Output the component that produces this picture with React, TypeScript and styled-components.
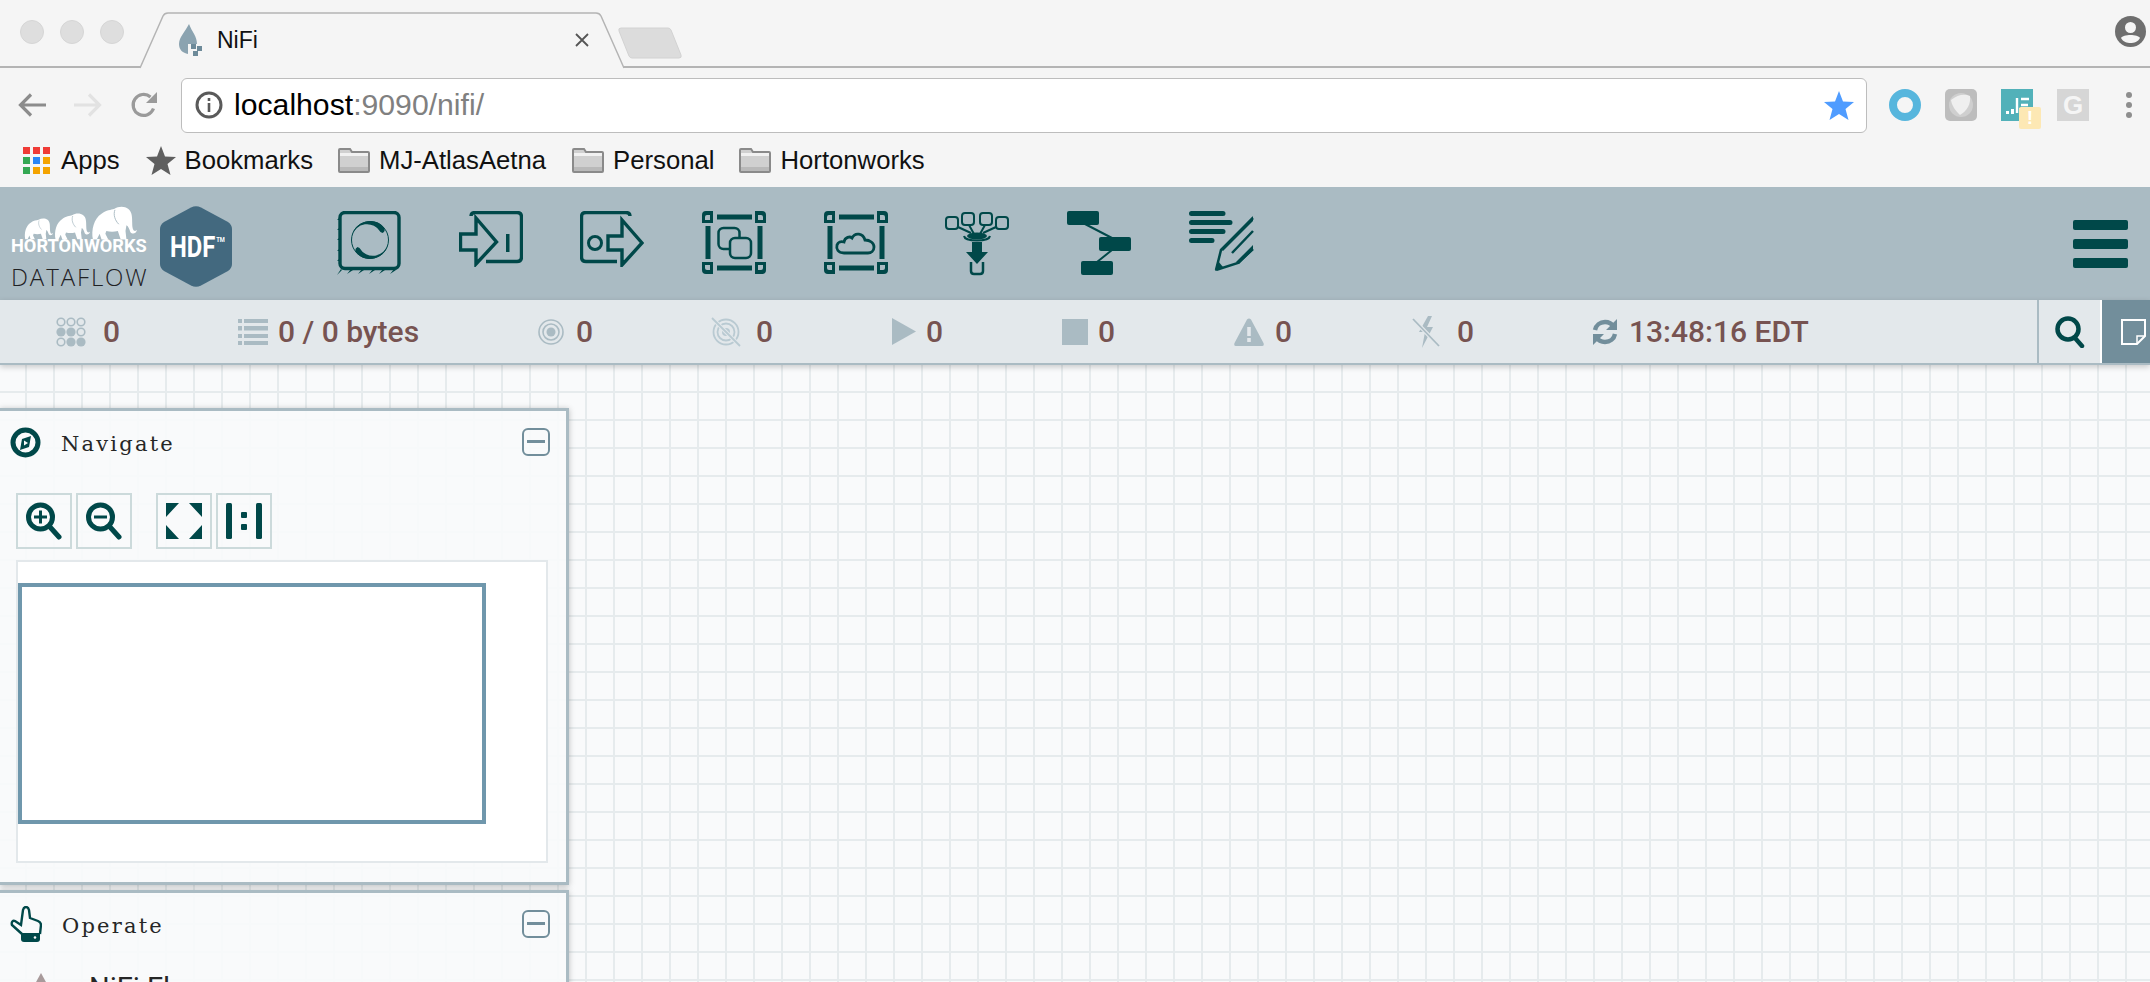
import React from 'react';
import styled, { createGlobalStyle } from 'styled-components';

const TEAL = '#004849';
const STEEL = '#aabbc3';
const SLATE = '#728e9b';
const BROWN = '#775351';

const GlobalStyle = createGlobalStyle`
  html, body {
    margin: 0;
    padding: 0;
    height: 982px;
    overflow: hidden;
    background: #f5f5f5;
    font-family: 'Liberation Sans', Arial, sans-serif;
  }
  * { box-sizing: border-box; }
  svg { display: block; flex: none; }
`;

const Page = styled.div`
  display: flex;
  flex-direction: column;
  width: 2150px;
  height: 982px;
  overflow: hidden;
`;

/* browser chrome */
const TabStrip = styled.div`
  display: flex;
  align-items: flex-start;
  height: 68px;
  padding-left: 20px;
  border-bottom: 2px solid #b4b4b4;
  background: #f5f5f5;
  flex: none;
`;

const Lights = styled.div`
  display: flex;
  gap: 16px;
  margin-top: 20px;
`;

const Light = styled.span`
  width: 24px;
  height: 24px;
  border-radius: 50%;
  background: #dedede;
  border: 1px solid #d6d6d6;
`;

const Tab = styled.div`
  position: relative;
  display: flex;
  align-items: center;
  width: 484px;
  height: 56px;
  margin: 12px 0 0 16px;
  padding: 0 35px 0 38px;
  gap: 15px;
  font-size: 23px;
  color: #111;
`;

const TabShape = styled.svg`
  position: absolute;
  left: 0;
  top: 0;
`;

const TabIcon = styled.svg`
  position: relative;
`;

const TabTitle = styled.span`
  position: relative;
  flex: 1;
`;

const TabClose = styled.svg`
  position: relative;
`;

const NewTab = styled.svg`
  margin: 27px 0 0 -6px;
`;

const Avatar = styled.svg`
  margin: 16px 4px 0 auto;
`;

const Toolbar = styled.div`
  display: flex;
  align-items: center;
  height: 72px;
  padding: 2px 0 0 18px;
  background: #f5f5f5;
  flex: none;
`;

const NavIcons = styled.div`
  display: flex;
  align-items: center;
  gap: 28px;
  margin-right: 23px;
`;

const Omnibox = styled.div`
  display: flex;
  align-items: center;
  width: 1686px;
  height: 55px;
  padding: 0 12px 0 13px;
  background: #fff;
  border: 1.5px solid #bdbdbd;
  border-radius: 6px;
`;

const Url = styled.div`
  flex: 1;
  margin-left: 11px;
  font-size: 30.2px;
  color: #000;
  white-space: nowrap;
`;

const UrlMuted = styled.span`
  color: #808080;
`;

const Extensions = styled.div`
  display: flex;
  align-items: center;
  margin-left: 22px;
`;

const ExtSlot = styled.div<{ $width: number }>`
  position: relative;
  width: ${({ $width }) => $width}px;
`;

const ExtBadge = styled.span`
  position: absolute;
  left: 18px;
  top: 18px;
  width: 22px;
  height: 22px;
  border-radius: 2px;
  background: #fde8b4;
  color: #fff;
  font-weight: 700;
  font-size: 19px;
  line-height: 22px;
  text-align: center;
`;

const GBox = styled.div`
  width: 32px;
  height: 32px;
  background: #d6d6d6;
  color: #f5f5f5;
  font-weight: 700;
  font-size: 26px;
  line-height: 32px;
  text-align: center;
`;

const MenuDots = styled.div`
  display: flex;
  flex-direction: column;
  gap: 4px;
  margin-left: 37px;
`;

const MenuDot = styled.span`
  width: 6px;
  height: 6px;
  border-radius: 50%;
  background: #8e8e8e;
`;

const Bookmarks = styled.div`
  display: flex;
  align-items: center;
  height: 47px;
  padding: 0 0 7px 23px;
  background: #f5f5f5;
  font-size: 25.7px;
  color: #111;
  flex: none;
`;

const Bookmark = styled.div<{ $gap: number; $next: number }>`
  display: flex;
  align-items: center;
  gap: ${({ $gap }) => $gap}px;
  margin-right: ${({ $next }) => $next}px;
  white-space: nowrap;
`;

const AppsGrid = styled.div`
  display: grid;
  grid-template-columns: repeat(3, 7px);
  grid-auto-rows: 7px;
  gap: 3px;
`;

const AppsDot = styled.span<{ $color: string }>`
  background: ${({ $color }) => $color};
`;

/* NiFi header */
const FlowHeader = styled.header`
  display: flex;
  align-items: flex-start;
  height: 113px;
  padding-left: 11px;
  background: ${STEEL};
  flex: none;
`;

const Brand = styled.div`
  display: flex;
  flex-direction: column;
  width: 149px;
  margin-top: 18px;
`;

const Herd = styled.div`
  display: flex;
  align-items: flex-end;
  gap: 1px;
  height: 35px;
  margin-left: 13px;
`;

const BrandName = styled.div`
  margin-top: -2px;
  font-family: Roboto, sans-serif;
  font-weight: 700;
  font-size: 18.2px;
  line-height: 15px;
  color: #fff;
  white-space: nowrap;
`;

const BrandProduct = styled.div`
  margin-top: 11px;
  font-family: 'Open Sans', sans-serif;
  font-weight: 300;
  font-size: 24px;
  line-height: 26px;
  letter-spacing: 1.9px;
  color: #1f2123;
  white-space: nowrap;
`;

const HexBadge = styled.div`
  position: relative;
  display: flex;
  align-items: center;
  justify-content: center;
  width: 72px;
  height: 81px;
  margin-top: 19px;
`;

const HexShape = styled.svg`
  position: absolute;
  inset: 0;
`;

const HexLabel = styled.span`
  position: relative;
  margin-left: 3px;
  font-family: Roboto, sans-serif;
  font-weight: 700;
  font-size: 29px;
  color: #fff;
  transform: scaleX(0.82);
`;

const HexMark = styled.sup`
  font-size: 7px;
  vertical-align: 15px;
  line-height: 0;
  margin-left: 1px;
`;

const ToolIcons = styled.div`
  display: flex;
  align-items: flex-start;
  gap: 57.7px;
  margin: 24px 0 0 105px;
`;

const Hamburger = styled.div`
  display: flex;
  flex-direction: column;
  gap: 9.5px;
  width: 55px;
  margin: 33px 22px 0 auto;
`;

const HamburgerBar = styled.span`
  height: 9.5px;
  border-radius: 2px;
  background: ${TEAL};
`;

/* status bar */
const StatusBar = styled.div`
  position: relative;
  z-index: 2;
  display: flex;
  align-items: stretch;
  height: 65px;
  padding-left: 56px;
  background: #e3e8eb;
  border-bottom: 2px solid ${STEEL};
  box-shadow: 0 2px 6px rgba(0, 0, 0, 0.2);
  flex: none;
`;

const StatItem = styled.div<{ $width: number; $gap: number }>`
  display: flex;
  align-items: center;
  gap: ${({ $gap }) => $gap}px;
  width: ${({ $width }) => $width}px;
  font-family: Roboto, sans-serif;
  font-weight: 500;
  font-size: 30px;
  color: ${BROWN};
  white-space: nowrap;
`;

const StatusButtons = styled.div`
  display: flex;
  margin-left: auto;
`;

const SearchButton = styled.div`
  display: flex;
  align-items: center;
  justify-content: center;
  width: 65px;
  border-left: 2px solid ${STEEL};
  border-right: 2px solid #fff;
`;

const NoteButton = styled.div`
  display: flex;
  align-items: center;
  width: 48px;
  padding-left: 18px;
  background: ${SLATE};
`;

/* canvas and palettes */
const Canvas = styled.main`
  flex: 1;
  display: flex;
  flex-direction: column;
  gap: 5px;
  padding-top: 43px;
  overflow: hidden;
  background-color: #f9fafb;
  background-image:
    linear-gradient(90deg, #e6ebed 2px, transparent 2px),
    linear-gradient(#e6ebed 2px, transparent 2px);
  background-size: 28px 28px;
  background-position: 25px 26px;
`;

const Palette = styled.section<{ $height: number }>`
  width: 569px;
  height: ${({ $height }) => $height}px;
  padding: 0 16px 0 10px;
  background: rgba(249, 250, 251, 0.92);
  border: 3px solid ${STEEL};
  border-left: 0;
  box-shadow: 0 1px 6px rgba(0, 0, 0, 0.25);
  flex: none;
`;

const PaletteHead = styled.div`
  display: flex;
  align-items: center;
  height: 62px;
  gap: 20px;
`;

const PaletteTitle = styled.h2`
  flex: 1;
  margin: 0;
  padding-top: 3px;
  font-family: 'DejaVu Serif', serif;
  font-weight: 400;
  font-size: 21px;
  letter-spacing: 2.2px;
  color: #262626;
`;

const Collapse = styled.div`
  position: relative;
  width: 28px;
  height: 28px;
  border: 2.5px solid ${SLATE};
  border-radius: 6px;
  &::after {
    content: '';
    position: absolute;
    left: 3px;
    right: 3px;
    top: 10px;
    height: 3px;
    background: ${SLATE};
  }
`;

const NavButtons = styled.div`
  display: flex;
  gap: 4px;
  margin: 20px 0 0 6px;
`;

const NavButton = styled.div<{ $spaced?: boolean }>`
  display: flex;
  align-items: center;
  justify-content: center;
  width: 56px;
  height: 56px;
  margin-left: ${({ $spaced }) => ($spaced ? 20 : 0)}px;
  border: 2.5px solid #ccdadb;
`;

const Birdseye = styled.div`
  width: 532px;
  height: 303px;
  margin: 11px 0 0 6px;
  padding: 21px 0 0 0;
  background: #fff;
  border: 2px solid #e3e8eb;
`;

const Viewport = styled.div`
  width: 468px;
  height: 241px;
  background: #fff;
  border: 4px solid #6f97ac;
`;

const FlowRow = styled.div`
  display: flex;
  align-items: flex-start;
  gap: 37px;
  margin: 18px 0 0 20px;
  font-family: Roboto, sans-serif;
  font-size: 29px;
  line-height: 30px;
  color: #262626;
`;

const Elephant = ({ width }: { width: number }) => (
  <svg width={width} viewBox="0 0 48 36">
    <path
      fill="#fff"
      d="M2 35C0 25 3 13 11 8C16 4 21 4 24 3C29 0 35 0 39 3C43 6 43 12 43 18C43 23 44 26 46 26L48 25C47 29 43 30 41 27C40 24 39 21 37 20L36 26L37 35H31L28 26C24 27 20 27 16 26L15 29L18 35H11L9 29L6 35Z"
    />
    <path fill="none" stroke={STEEL} strokeWidth="1" d="M25 4C23 9 25 15 29 19" />
  </svg>
);

const GroupFrame = () => (
  <>
    <path fill={TEAL} d="M4 0H11V12H0V4Q0 0 4 0ZM53 0H60Q64 0 64 4V12H53ZM0 51H11V63H4Q0 63 0 59ZM53 51H64V59Q64 63 60 63H53Z" />
    <path fill={STEEL} d="M5 4H8V9H3V6Q3 4 5 4ZM56 4H59Q61 4 61 6V9H56ZM3 54H8V59H5Q3 59 3 57ZM56 54H61V57Q61 59 59 59H56Z" />
    <path stroke={TEAL} strokeWidth="5" d="M15 6H50M15 57H50M6 15V48M58 15V48" />
  </>
);

const ProcessorIcon = () => (
  <svg width="64" height="65" viewBox="0 0 64 65">
    <rect x="3" y="1.5" width="59" height="56" rx="5" fill="none" stroke={TEAL} strokeWidth="3.4" />
    <path fill={TEAL} d="M3 6L0 9L3 9ZM3 16L0 19L3 19ZM3 26L0 29L3 29ZM3 37L0 40L3 40ZM3 47L0 50L3 50ZM4 58L0 64L5 59ZM14 58L10 63L16 59ZM25 58L21 63L27 59ZM36 58L32 63L38 59ZM46 58L42 63L48 59ZM57 58L53 63L59 59Z" />
    <circle cx="33" cy="29" r="18.5" fill="none" stroke={TEAL} strokeWidth="1" />
    <path fill={TEAL} d="M15 25A18.5 18.5 0 0 1 47 16.5Q49 20 45.5 22L43.5 21A15.5 15.5 0 0 0 15 25Z" />
    <path fill={TEAL} d="M51 33A18.5 18.5 0 0 1 19 41.5Q17 38 20.5 36L22.5 37A15.5 15.5 0 0 0 51 33Z" />
  </svg>
);

const InputPortIcon = () => (
  <svg width="64" height="56" viewBox="0 0 64 56">
    <path fill="none" stroke={TEAL} strokeWidth="3.4" d="M12 5Q12 1.5 16 1.5H58Q62.5 1.5 62.5 6V46Q62.5 50.5 58 50.5H27" />
    <path fill={STEEL} stroke={TEAL} strokeWidth="3.4" strokeLinejoin="miter" d="M1.5 23H17V7L37.5 31L17 53V39H1.5Z" />
    <rect x="47" y="23" width="3.5" height="18" fill={TEAL} />
  </svg>
);

const OutputPortIcon = () => (
  <svg width="64" height="56" viewBox="0 0 64 56">
    <path fill="none" stroke={TEAL} strokeWidth="3.4" d="M50 5Q50 1.5 46 1.5H6Q1.5 1.5 1.5 6V46Q1.5 50.5 6 50.5H37" />
    <circle cx="15" cy="32" r="6.5" fill="none" stroke={TEAL} strokeWidth="3" />
    <path fill={STEEL} stroke={TEAL} strokeWidth="3.4" d="M28 25H42V9L62 32L42 54V39H28Z" />
  </svg>
);

const GroupIcon = () => (
  <svg width="64" height="63" viewBox="0 0 64 63">
    <GroupFrame />
    <rect x="16.5" y="17" width="21" height="21" rx="5" fill="none" stroke={TEAL} strokeWidth="2.5" />
    <rect x="28" y="27" width="21" height="20" rx="5" fill={STEEL} stroke={TEAL} strokeWidth="2.5" />
  </svg>
);

const RemoteGroupIcon = () => (
  <svg width="64" height="63" viewBox="0 0 64 63">
    <GroupFrame />
    <path fill="none" stroke={TEAL} strokeWidth="2.8" d="M20 42C14 42 12 38 13 34C14 31 17 30 20 31C21 26 26 25 28 27C31 21 39 22 41 29C46 29 50 32 50 36C50 40 47 42 44 42Z" />
  </svg>
);

const FunnelIcon = () => (
  <svg width="64" height="65" viewBox="0 0 64 65">
    <g fill="none" stroke={TEAL} strokeWidth="2">
      <rect x="1" y="6" width="12" height="12" rx="3" />
      <rect x="17" y="2" width="12" height="12" rx="3" />
      <rect x="35" y="2" width="12" height="12" rx="3" />
      <rect x="51" y="6" width="12" height="12" rx="3" />
      <path d="M13 16L26 22M24 14L29 23M40 14L35 23M51 16L38 22" />
      <path d="M19 25C20 31 44 31 45 25" />
      <path strokeWidth="2.5" d="M26 51V60Q26 63 29 63H35Q38 63 38 60V51" />
    </g>
    <ellipse cx="32" cy="25" rx="10" ry="3.5" fill={TEAL} />
    <path fill={TEAL} d="M27 31H37V41H43L32 53L21 41H27Z" />
  </svg>
);

const TemplateIcon = () => (
  <svg width="64" height="64" viewBox="0 0 64 64">
    <path stroke={TEAL} strokeWidth="2" d="M18 13L45 27M45 39L30 51" />
    <g fill={TEAL}>
      <rect x="0" y="0" width="32" height="14" rx="2" />
      <rect x="32" y="26" width="32" height="14" rx="2" />
      <rect x="14" y="50" width="32" height="14" rx="2" />
    </g>
  </svg>
);

const LabelIcon = () => (
  <svg width="65" height="60" viewBox="0 0 65 60">
    <path stroke={TEAL} strokeWidth="5" strokeLinecap="round" d="M2.5 2.5H34M2.5 11.5H41M2.5 20.5H34M2.5 29.5H23" />
    <path fill="none" stroke={TEAL} strokeWidth="2.5" d="M27 59L32 39L64 7M27 59L49 52L64 38M43 42L64 20" />
    <path fill={TEAL} d="M26 60L29 50L34 56Z" />
    <path fill={TEAL} d="M32 38L64 5V10L34 40ZM47 51L64 34V39L50 53Z" />
  </svg>
);

const ClusterIcon = () => (
  <svg width="30" height="30" viewBox="0 0 30 30">
    {[0, 1, 2].flatMap((row) =>
      [0, 1, 2].map((col) => {
        const solid = (row === 1 && col < 2) || (row === 2 && col > 0);
        return (
          <circle
            key={`${row}-${col}`}
            cx={5 + col * 10}
            cy={5 + row * 10}
            r={solid ? 4.6 : 3.8}
            fill={solid ? STEEL : 'none'}
            stroke={STEEL}
            strokeWidth={solid ? 0 : 1.6}
          />
        );
      }),
    )}
  </svg>
);

const QueueIcon = () => (
  <svg width="30" height="26" viewBox="0 0 30 26" fill={STEEL}>
    <path d="M0 0H4V4H0ZM0 7H4V11.5H0ZM0 15H4V19H0ZM0 22H4V26H0ZM6 0H30V4H6ZM6 7H30V11.5H6ZM6 15H30V19H6ZM6 22H30V26H6Z" />
  </svg>
);

const TransmitIcon = () => (
  <svg width="26" height="26" viewBox="0 0 26 26" fill="none" stroke={STEEL}>
    <circle cx="13" cy="13" r="12" strokeWidth="1.6" />
    <circle cx="13" cy="13" r="8" strokeWidth="1.6" />
    <circle cx="13" cy="13" r="4.5" fill={STEEL} strokeWidth="0" />
  </svg>
);

const NotTransmitIcon = () => (
  <svg width="30" height="30" viewBox="0 0 30 30" fill="none" stroke="#b9cad2" strokeWidth="1.8">
    <circle cx="15" cy="15" r="12.5" />
    <circle cx="15" cy="15" r="8.5" />
    <circle cx="15" cy="15" r="4" fill="#b9cad2" strokeWidth="0" />
    <path d="M1 1L29 29" stroke="#e3e8eb" strokeWidth="4" />
    <path d="M1 1L29 29" />
  </svg>
);

const PlayIcon = () => (
  <svg width="24" height="27" viewBox="0 0 24 27">
    <path fill={STEEL} d="M0 0L24 13.5L0 27Z" />
  </svg>
);

const StopIcon = () => (
  <svg width="26" height="26" viewBox="0 0 26 26">
    <rect width="26" height="26" fill={STEEL} />
  </svg>
);

const WarningIcon = () => (
  <svg width="30" height="28" viewBox="0 0 30 28">
    <path fill={STEEL} fillRule="evenodd" d="M13 1.5Q15 -0.5 17 1.5L29.5 25Q30.5 28 28 28H2Q-0.5 28 0.5 25ZM13.2 9V18H16.8V9ZM13.2 20V24H16.8V20Z" />
  </svg>
);

const BoltOffIcon = () => (
  <svg width="28" height="32" viewBox="0 0 28 32">
    <path fill={STEEL} d="M16 0L7 16H13L10 32L21 11H15L20 0Z" />
    <path stroke="#e3e8eb" strokeWidth="4" d="M1 3L27 30" />
    <path stroke={STEEL} strokeWidth="1.8" d="M1 3L27 30" />
  </svg>
);

const RefreshIcon = () => (
  <svg width="26" height="28" viewBox="0 0 26 28">
    <path fill="none" stroke={SLATE} strokeWidth="4.4" d="M3 12C4 7 8 4 13 4C17 4 20 6 22 9M23 16C22 21 18 24 13 24C9 24 6 22 4 19" />
    <path fill={SLATE} d="M25 1V12H14ZM1 27V16H12Z" />
  </svg>
);

const SearchIcon = () => (
  <svg width="30" height="32" viewBox="0 0 30 32" fill="none" stroke={TEAL}>
    <circle cx="13" cy="13" r="10.5" strokeWidth="4.5" />
    <path d="M20 22L27 30" strokeWidth="4.5" strokeLinecap="round" />
  </svg>
);

const NoteIcon = () => (
  <svg width="26" height="26" viewBox="0 0 26 26" fill="none" stroke="#fff" strokeWidth="2">
    <path d="M2 1H25V17L17 25H2Z" />
    <path d="M25 17H17V25" strokeWidth="1.5" />
  </svg>
);

const CompassIcon = () => (
  <svg width="31" height="31" viewBox="0 0 31 31">
    <circle cx="15.5" cy="15.5" r="12.5" fill="none" stroke={TEAL} strokeWidth="5" />
    <path fill={TEAL} d="M21 9L19 20L10 23L12 12Z" />
    <path fill="#f9fafb" d="M14 13.5L18 16L14 18.5Z" />
  </svg>
);

const ZoomIcon = ({ plus }: { plus?: boolean }) => (
  <svg width="36" height="38" viewBox="0 0 36 38" fill="none" stroke={TEAL}>
    <circle cx="14.5" cy="15" r="12" strokeWidth="5" />
    <path d="M24 25L33 35" strokeWidth="5" strokeLinecap="round" />
    <path d="M8 15H21" strokeWidth="3" />
    {plus && <path d="M14.5 8.5V21.5" strokeWidth="3" />}
  </svg>
);

const FitIcon = () => (
  <svg width="36" height="36" viewBox="0 0 36 36" fill={TEAL}>
    <path d="M0 0H13L0 14ZM36 0H23L36 14ZM0 36H13L0 22ZM36 36H23L36 22Z" />
  </svg>
);

const ActualSizeIcon = () => (
  <svg width="36" height="36" viewBox="0 0 36 36" fill={TEAL}>
    <rect x="0" y="0" width="6" height="36" rx="1.5" />
    <rect x="30" y="0" width="6" height="36" rx="1.5" />
    <rect x="15" y="9" width="6" height="6" rx="1" />
    <rect x="15" y="21" width="6" height="6" rx="1" />
  </svg>
);

const HandIcon = () => (
  <svg width="32" height="36" viewBox="0 0 32 36">
    <path fill="none" stroke={TEAL} strokeWidth="2.4" d="M12 28L2 19C1 16 3 14 5 15L11 19L13 4C14 0 18 0 19 4L20 12L28 15C30 16 31 17 31 19L30 28" />
    <path fill={TEAL} d="M11 27H30V33Q30 36 27 36H14Q11 36 11 33Z" />
    <circle cx="25" cy="31.5" r="1.3" fill="#f9fafb" />
  </svg>
);

const STATS = [
  { width: 182, gap: 17, icon: <ClusterIcon />, text: '0' },
  { width: 300, gap: 10, icon: <QueueIcon />, text: '0 / 0 bytes' },
  { width: 173, gap: 12, icon: <TransmitIcon />, text: '0' },
  { width: 181, gap: 15, icon: <NotTransmitIcon />, text: '0' },
  { width: 170, gap: 10, icon: <PlayIcon />, text: '0' },
  { width: 172, gap: 10, icon: <StopIcon />, text: '0' },
  { width: 178, gap: 11, icon: <WarningIcon />, text: '0' },
  { width: 180, gap: 17, icon: <BoltOffIcon />, text: '0' },
  { width: 230, gap: 11, icon: <RefreshIcon />, text: '13:48:16 EDT' },
];

const APPS = ['#ef3b36', '#ef3b36', '#ef3b36', '#34a853', '#2a85f5', '#f4a300', '#34a853', '#f4a300', '#f4a300'];

const Folder = () => (
  <svg width="32" height="25" viewBox="0 0 32 25">
    <path fill="#d0d0d0" stroke="#8a8a8a" strokeWidth="2" d="M2 1H12L14 4H30Q31 4 31 5V23Q31 24 30 24H2Q1 24 1 23V2Q1 1 2 1Z" />
    <path fill="#f1f1f1" d="M2 5H30V8H2Z" />
    <path fill="#b9b9b9" d="M2 19H30V23H2Z" />
  </svg>
);

export default function App() {
  return (
    <Page>
      <GlobalStyle />
      <TabStrip>
        <Lights>
          <Light />
          <Light />
          <Light />
        </Lights>
        <Tab>
          <TabShape width="484" height="57" viewBox="0 0 484 57">
            <path fill="#f5f5f5" stroke="#b4b4b4" strokeWidth="1.5" d="M0 56L23 4Q24.5 1 28 1H456Q459.5 1 461 4L484 56" />
          </TabShape>
          <TabIcon width="24" height="32" viewBox="0 0 24 32">
            <path fill="#8ba3b0" d="M11 0C7 8 1 13 1 20C1 26 5 29 10 30V20H19C19 12 14 8 11 0Z" />
            <path fill="#6d8a99" d="M13 20H18V25H13ZM19 22H24V27H19ZM15 27H20V32H15Z" />
          </TabIcon>
          <TabTitle>NiFi</TabTitle>
          <TabClose width="14" height="14" viewBox="0 0 14 14">
            <path stroke="#555" strokeWidth="1.8" d="M1 1L13 13M13 1L1 13" />
          </TabClose>
        </Tab>
        <NewTab width="64" height="32" viewBox="0 0 64 32">
          <path fill="#dcdcdc" stroke="#d2d2d2" d="M3 1H50Q52 1 53 3L63 28Q64 31 61 31H14Q12 31 11 29L1 4Q0 1 3 1Z" />
        </NewTab>
        <Avatar width="31" height="31" viewBox="0 0 31 31">
          <circle cx="15.5" cy="15.5" r="15.5" fill="#6e6e6e" />
          <circle cx="15.5" cy="11.5" r="5.5" fill="#f5f5f5" />
          <path fill="#f5f5f5" d="M6 22C8 18 23 18 25 22C23 26 19 27 15.5 27C12 27 8 26 6 22Z" />
        </Avatar>
      </TabStrip>
      <Toolbar>
        <NavIcons>
          <svg width="28" height="24" viewBox="0 0 28 24" fill="none" stroke="#8c8c8c" strokeWidth="3.2">
            <path d="M28 12H3M13 1.5L2.5 12L13 22.5" />
          </svg>
          <svg width="28" height="24" viewBox="0 0 28 24" fill="none" stroke="#e2e2e2" strokeWidth="3.2">
            <path d="M0 12H25M15 1.5L25.5 12L15 22.5" />
          </svg>
          <svg width="28" height="28" viewBox="0 0 28 28" fill="none">
            <path stroke="#9a9a9a" strokeWidth="3.2" d="M23.5 17.5A10.5 10.5 0 1 1 20.5 6" />
            <path fill="#9a9a9a" d="M27 1V12H16Z" />
          </svg>
        </NavIcons>
        <Omnibox>
          <svg width="28" height="28" viewBox="0 0 28 28" fill="none">
            <circle cx="14" cy="14" r="12" stroke="#5a5a5a" strokeWidth="3" />
            <path stroke="#5a5a5a" strokeWidth="2.6" d="M14 12V21M14 7V10" />
          </svg>
          <Url>
            localhost<UrlMuted>:9090/nifi/</UrlMuted>
          </Url>
          <svg width="30" height="29" viewBox="0 0 30 29">
            <path fill="#4f9cff" d="M15 0L19 10.5L30 11L21.5 18L24.5 29L15 23L5.5 29L8.5 18L0 11L11 10.5Z" />
          </svg>
        </Omnibox>
        <Extensions>
          <ExtSlot $width={56}>
            <svg width="32" height="32" viewBox="0 0 32 32">
              <circle cx="16" cy="16" r="12" fill="none" stroke="#57b6dd" strokeWidth="8" />
            </svg>
          </ExtSlot>
          <ExtSlot $width={56}>
            <svg width="32" height="32" viewBox="0 0 32 32">
              <rect width="32" height="32" rx="5" fill="#bdbdbd" />
              <circle cx="16" cy="16" r="12" fill="#cfcfcf" />
              <path fill="#efefef" d="M6 11Q16 3 25 7C26 15 22 22 15 26C10 21 7 17 6 11Z" />
            </svg>
          </ExtSlot>
          <ExtSlot $width={56}>
            <svg width="32" height="32" viewBox="0 0 32 32">
              <rect width="32" height="32" fill="#52b1b9" />
              <path stroke="#fff" strokeWidth="2.4" d="M20 10H28M20 16H27M16 9V24" />
              <path fill="#fff" d="M5 22H8V25H5ZM10 20H13V25H10ZM18 19H21V24H18Z" />
            </svg>
            <ExtBadge>!</ExtBadge>
          </ExtSlot>
          <ExtSlot $width={32}>
            <GBox>G</GBox>
          </ExtSlot>
          <MenuDots>
            <MenuDot />
            <MenuDot />
            <MenuDot />
          </MenuDots>
        </Extensions>
      </Toolbar>
      <Bookmarks>
        <Bookmark $gap={11} $next={26}>
          <AppsGrid>
            {APPS.map((color, i) => (
              <AppsDot key={i} $color={color} />
            ))}
          </AppsGrid>
          Apps
        </Bookmark>
        <Bookmark $gap={9} $next={25}>
          <svg width="30" height="29" viewBox="0 0 30 29">
            <path fill="#5f5f5f" d="M15 0L19 10.5L30 11L21.5 18L24.5 29L15 23L5.5 29L8.5 18L0 11L11 10.5Z" />
          </svg>
          Bookmarks
        </Bookmark>
        <Bookmark $gap={9} $next={26}>
          <Folder />
          MJ-AtlasAetna
        </Bookmark>
        <Bookmark $gap={9} $next={25}>
          <Folder />
          Personal
        </Bookmark>
        <Bookmark $gap={9} $next={0}>
          <Folder />
          Hortonworks
        </Bookmark>
      </Bookmarks>
      <FlowHeader>
        <Brand>
          <Herd>
            <Elephant width={29} />
            <Elephant width={36} />
            <Elephant width={46} />
          </Herd>
          <BrandName>HORTONWORKS</BrandName>
          <BrandProduct>DATAFLOW</BrandProduct>
        </Brand>
        <HexBadge>
          <HexShape width="72" height="81" viewBox="0 0 72 81">
            <path fill="#43697f" d="M31 1.5Q36 -1 41 1.5L68 16Q72 19 72 23V58Q72 62 68 65L41 79.5Q36 82 31 79.5L4 65Q0 62 0 58V23Q0 19 4 16Z" />
          </HexShape>
          <HexLabel>
            HDF<HexMark>TM</HexMark>
          </HexLabel>
        </HexBadge>
        <ToolIcons>
          <ProcessorIcon />
          <InputPortIcon />
          <OutputPortIcon />
          <GroupIcon />
          <RemoteGroupIcon />
          <FunnelIcon />
          <TemplateIcon />
          <LabelIcon />
        </ToolIcons>
        <Hamburger>
          <HamburgerBar />
          <HamburgerBar />
          <HamburgerBar />
        </Hamburger>
      </FlowHeader>
      <StatusBar>
        {STATS.map((stat, i) => (
          <StatItem key={i} $width={stat.width} $gap={stat.gap}>
            {stat.icon}
            {stat.text}
          </StatItem>
        ))}
        <StatusButtons>
          <SearchButton>
            <SearchIcon />
          </SearchButton>
          <NoteButton>
            <NoteIcon />
          </NoteButton>
        </StatusButtons>
      </StatusBar>
      <Canvas>
        <Palette $height={477}>
          <PaletteHead>
            <CompassIcon />
            <PaletteTitle>Navigate</PaletteTitle>
            <Collapse />
          </PaletteHead>
          <NavButtons>
            <NavButton>
              <ZoomIcon plus />
            </NavButton>
            <NavButton>
              <ZoomIcon />
            </NavButton>
            <NavButton $spaced>
              <FitIcon />
            </NavButton>
            <NavButton>
              <ActualSizeIcon />
            </NavButton>
          </NavButtons>
          <Birdseye>
            <Viewport />
          </Birdseye>
        </Palette>
        <Palette $height={200}>
          <PaletteHead>
            <HandIcon />
            <PaletteTitle>Operate</PaletteTitle>
            <Collapse />
          </PaletteHead>
          <FlowRow>
            <svg width="22" height="20" viewBox="0 0 22 20">
              <path fill="#a89a9b" d="M11 0L22 20H0Z" />
            </svg>
            NiFi Fl
          </FlowRow>
        </Palette>
      </Canvas>
    </Page>
  );
}
